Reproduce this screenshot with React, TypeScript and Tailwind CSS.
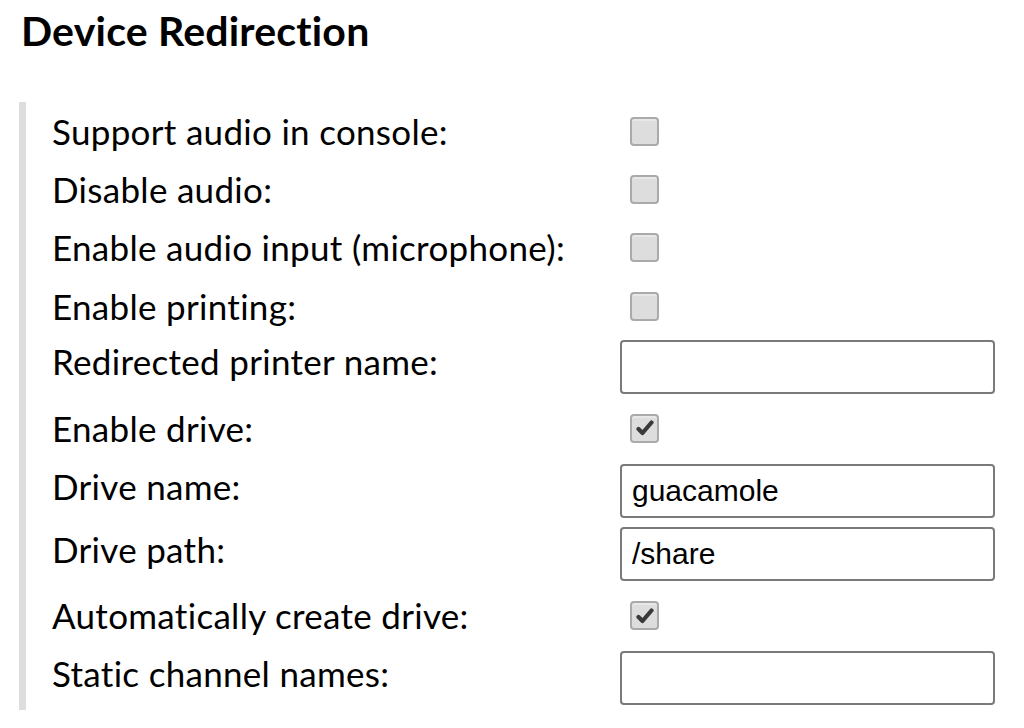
import React from "react";

type Row =
  | { label: string; kind: "check"; checked?: boolean; h: string }
  | { label: string; kind: "text"; value?: string; h: string };

const rows: Row[] = [
  { label: "Support audio in console:", kind: "check", h: "h-[58px]" },
  { label: "Disable audio:", kind: "check", h: "h-[58px]" },
  { label: "Enable audio input (microphone):", kind: "check", h: "h-[58px]" },
  { label: "Enable printing:", kind: "check", h: "h-[60px]" },
  { label: "Redirected printer name:", kind: "text", h: "h-[61px]" },
  { label: "Enable drive:", kind: "check", checked: true, h: "h-[62px]" },
  { label: "Drive name:", kind: "text", value: "guacamole", h: "h-[64px]" },
  { label: "Drive path:", kind: "text", value: "/share", h: "h-[62px]" },
  { label: "Automatically create drive:", kind: "check", checked: true, h: "h-[61px]" },
  { label: "Static channel names:", kind: "text", h: "h-[64px]" },
];

const Checkbox = ({ checked }: { checked?: boolean }) => (
  <div className="ml-[10px] flex h-[29px] w-[29px] items-center justify-center rounded-[4px] border-2 border-[#aaaaaa] bg-[#dddddd] shadow-[inset_0_2px_0_#e8e8e8]">
    {checked && (
      <svg width="18" height="18" viewBox="0 0 18 18">
        <path
          d="M2.5 10 L6.5 14 L15.5 3.5"
          fill="none"
          stroke="#3a3a3a"
          strokeWidth="4.2"
          strokeLinejoin="round"
          strokeLinecap="round"
        />
      </svg>
    )}
  </div>
);

const TextField = ({ value }: { value?: string }) => (
  <input
    type="text"
    defaultValue={value}
    className="h-[54px] w-[375px] rounded-[4px] border-2 border-[#7a7a7a] bg-white px-[10px] text-[30px] text-black outline-none [font-family:'Liberation_Sans',Arial,sans-serif]"
  />
);

const App = () => {
  return (
    <div className="min-h-screen bg-white text-black [font-family:Lato,'Open_Sans',sans-serif]">
      <h2 className="pl-[21px] pt-[10px] text-[41px] font-bold leading-none tracking-[0.2px]">
        Device Redirection
      </h2>

      <div className="ml-[19px] mt-[51px] w-fit border-l-[7px] border-[#dddddd] pl-[26px]">
        {rows.map((row) => (
          <div key={row.label} className={`flex items-center ${row.h}`}>
            <div
              className={`w-[568px] text-[35px] leading-none tracking-[0.3px] ${
                row.kind === "text" ? "mb-[10px]" : ""
              }`}
            >
              {row.label}
            </div>
            {row.kind === "check" ? (
              <Checkbox checked={row.checked} />
            ) : (
              <TextField value={row.value} />
            )}
          </div>
        ))}
      </div>
    </div>
  );
};

export default App;
